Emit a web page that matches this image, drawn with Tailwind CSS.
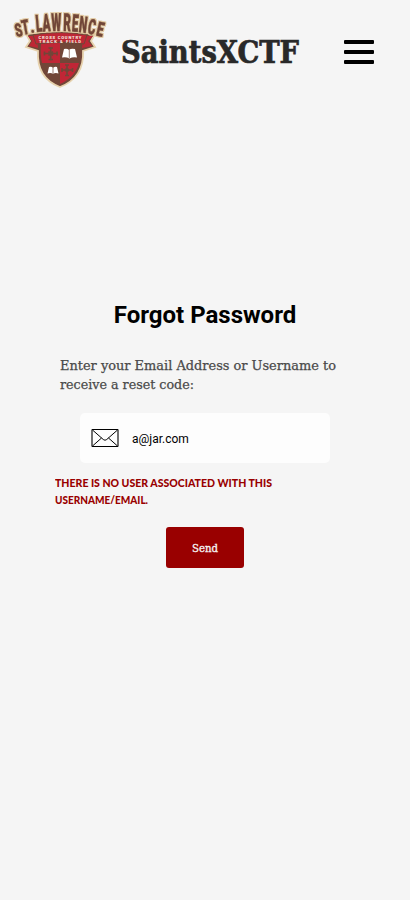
<!DOCTYPE html>
<html lang="en">
<head>
<meta charset="utf-8">
<title>SaintsXCTF</title>
<script src="https://cdn.jsdelivr.net/npm/@tailwindcss/browser@4"></script>
</head>
<body class="bg-[#f5f5f5] min-h-screen overflow-hidden font-['Roboto',sans-serif]">
<header class="flex h-[100px] items-center pl-[10px] pr-9">
  <svg class="w-[100px] h-[90px] shrink-0" viewBox="10 5 100 90" aria-label="St. Lawrence">
    <defs>
      <filter id="halo" x="-10%" y="-20%" width="120%" height="140%" color-interpolation-filters="sRGB">
        <feMorphology in="SourceAlpha" operator="dilate" radius="1" result="wide"/>
        <feFlood flood-color="#e0c79d"/>
        <feComposite in2="wide" operator="in" result="edge"/>
        <feMerge><feMergeNode in="edge"/><feMergeNode in="SourceGraphic"/></feMerge>
      </filter>
    </defs>
    <path d="M26 34Q60 29 95 34L91 41L95 47L83 51C84 68 76 81 60 87C44 81 37 68 38 51L26 47L30 41Z" fill="#714638" stroke="#e7d2ad" stroke-width="1.8"/>
    <path d="M28 36L37 36L38 48L29 46L32 41ZM93 36L83 36L82 48L92 46L88 41Z" fill="#bd2735"/>
    <path d="M33 35Q60 30 87 35L84 44Q60 40 36 44Z" fill="#bd2735" stroke="#714638" stroke-width="1"/>
    <path d="M41 44Q50 43 60 43V63H42Q40 55 41 44ZM60 63H79C76 74 69 80 60 84Z" fill="#c02636"/>
    <g fill="none" stroke="#714638" stroke-width="1.6">
      <path d="M43.500 53.500H58M50.700 47V60.500M44.500 51.500V55.500M57 51.500V55.500M48.500 48H53M48.500 59.500H53M48.500 51.500L53 55.500M53 51.500L48.500 55.500"/>
      <path d="M61.500 70H73M67 64.500V76M62 68V72M72.500 68V72M65 65H69M65 75.500H69M65.500 68.500L68.500 71.500M68.500 68.500L65.500 71.500"/>
    </g>
    <g fill="#fff">
      <path d="M64 49Q67 48 69 50Q71 48 75 49L77 57.500Q73 56.500 69.500 58.500Q66 56.500 62 57.500Z"/>
      <path d="M49 67Q51.500 66 53 68Q55 66 57 67L58.500 73.500Q55 72.500 53 74Q51 72.500 47.500 73.500Z"/>
    </g>
    <path d="M69.300 50V58M53 68V74" stroke="#714638" stroke-width=".7"/>
    <g fill="#f6e2dc" font-family="Roboto,sans-serif" font-weight="900" font-size="4.2" text-anchor="middle">
      <text x="60" y="39.300" textLength="43">CROSS COUNTRY</text>
      <text x="60" y="42.800" textLength="42">TRACK &amp; FIELD</text>
    </g>
    <g filter="url(#halo)" fill="#714638" stroke="#714638" stroke-width=".5" font-family="Roboto,sans-serif" font-weight="900" font-size="22">
      <text transform="translate(16.500 37.300) rotate(-13) scale(.52 .84)">S</text>
      <text transform="translate(23 34.800) rotate(-10) scale(.52 .93)">T</text>
      <text transform="translate(31 33) rotate(-7) scale(.6 .8)">.</text>
      <text transform="translate(36.500 32) rotate(-5) scale(.52 1.08)">L</text>
      <text transform="translate(42.900 31.400) rotate(-3) scale(.52 1.1)">A</text>
      <text transform="translate(51.500 31) rotate(-1) scale(.52 1.12)">W</text>
      <text transform="translate(63.200 31) rotate(1) scale(.52 1.12)">R</text>
      <text transform="translate(71.500 31.300) rotate(4) scale(.52 1.08)">E</text>
      <text transform="translate(78.200 31.900) rotate(7) scale(.52 1.03)">N</text>
      <text transform="translate(87 33.500) rotate(10) scale(.52 .96)">C</text>
      <text transform="translate(95.500 35.300) rotate(13) scale(.56 .9)">E</text>
    </g>
  </svg>
  <h1 class="ml-[10px] h-[50px] w-[180px] shrink-0"><svg class="block h-full w-full overflow-visible" viewBox="0 0 180 50"><text x="1" y="37.500" textLength="178" lengthAdjust="spacingAndGlyphs" fill="#292929" stroke="#292929" stroke-width=".7" font-size="32" font-weight="700" font-family="Roboto Slab,DejaVu Serif Condensed,DejaVu Serif,serif">SaintsXCTF</text></svg></h1>
  <button class="ml-auto flex w-[30px] flex-col gap-[6px] pt-1" aria-label="Menu">
    <span class="h-1 rounded-[1px] bg-black"></span>
    <span class="h-1 rounded-[1px] bg-black"></span>
    <span class="h-1 rounded-[1px] bg-black"></span>
  </button>
</header>
<main class="flex flex-col items-center pt-[199px]">
  <h2 class="h-8 text-2xl leading-8 font-bold text-black whitespace-nowrap">Forgot Password</h2>
  <p class="mt-[24px] h-10 w-[290px]">
    <svg class="block h-full w-full overflow-visible" viewBox="0 0 290 40" fill="#4a4a4a" stroke="#4a4a4a" stroke-width=".25" font-size="13.500" font-family="Roboto Slab,DejaVu Serif Condensed,DejaVu Serif,serif">
      <text x="0" y="15" textLength="276" lengthAdjust="spacingAndGlyphs">Enter your Email Address or Username to</text>
      <text x="0" y="34" textLength="134" lengthAdjust="spacingAndGlyphs">receive a reset code:</text>
    </svg>
  </p>
  <div class="mt-[18px] flex h-[50px] w-[250px] items-center rounded-[5px] bg-[#fdfdfd] pl-[11px]">
    <svg class="h-5 w-7" viewBox="0 0 28 20" fill="none" stroke="#000"><rect x="1" y="1.500" width="26" height="17" rx=".5" stroke-width="1.100"/><path d="M1.500 2L12.300 11.500Q14 13 15.700 11.500L26.500 2M1.500 18L10.500 10M26.500 18L17.500 10" stroke-width="1"/></svg>
    <span class="ml-[13px] pt-px text-xs text-black">a@jar.com</span>
  </div>
  <p class="mt-3 h-[34px] w-[300px]">
    <svg class="block h-full w-full" viewBox="0 0 300 34" fill="#900" font-size="11" font-weight="900" font-family="Lato,sans-serif">
      <text x="0" y="12" textLength="217" lengthAdjust="spacingAndGlyphs">THERE IS NO USER ASSOCIATED WITH THIS</text>
      <text x="0" y="29" textLength="93" lengthAdjust="spacingAndGlyphs">USERNAME/EMAIL.</text>
    </svg>
  </p>
  <button class="mt-[18px] flex h-[41px] w-[78px] items-center justify-center rounded-[3px] bg-[#900]" aria-label="Send">
    <svg class="h-5 w-[26px] overflow-visible" viewBox="0 0 26 20"><text x="0" y="13.700" textLength="26" lengthAdjust="spacingAndGlyphs" fill="#f5f5f5" stroke="#f5f5f5" stroke-width=".3" font-size="10.500" font-family="Roboto Slab,DejaVu Serif Condensed,DejaVu Serif,serif">Send</text></svg>
  </button>
</main>
</body>
</html>
